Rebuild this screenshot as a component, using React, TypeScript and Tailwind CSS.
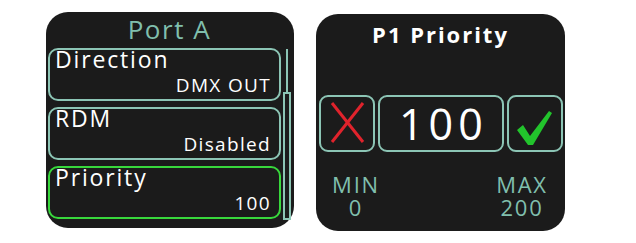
export default function App() {
  const items = [
    { name: "Direction", value: "DMX OUT", active: false },
    { name: "RDM", value: "Disabled", active: false },
    { name: "Priority", value: "100", active: true },
  ];
  return (
    <div className="w-[636px] h-[243px] bg-white flex items-start pl-[46px] pt-[12px] gap-[22px] font-['Open_Sans',sans-serif]">
      {/* Left panel */}
      <div className="w-[248px] h-[216px] rounded-[22px] bg-[#1b1b1b] flex flex-col pl-[2px] pr-[3px]">
        <div className="h-[36px] pt-[4px] text-center text-[26px] leading-none text-[#80bfad] tracking-[0.06em]">
          Port A
        </div>
        <div className="flex">
          <div className="w-[233px] flex flex-col gap-[6px]">
            {items.map((it) => (
              <div
                key={it.name}
                className={
                  it.active
                    ? "h-[53px] rounded-[10px] border-2 border-[#38d83c] flex flex-col justify-between pl-[5px] pr-[8px] pb-[4px]"
                    : "h-[53px] rounded-[10px] border-2 border-[#8cc5b5] flex flex-col justify-between pl-[5px] pr-[8px] pb-[4px]"
                }
              >
                <div className="text-[23px] leading-[18px] text-white tracking-[0.08em]">{it.name}</div>
                <div className="text-[19px] leading-[19px] text-white text-right tracking-[0.07em]">{it.value}</div>
              </div>
            ))}
          </div>
          <div className="ml-[2px] mt-[1px] h-[171px] w-[8px] flex flex-col items-center">
            <div className="w-[2px] h-[43px] bg-[#8cc5b5]" />
            <div className="w-[8px] flex-1 border-2 border-[#8cc5b5]" />
          </div>
        </div>
      </div>

      {/* Right panel */}
      <div className="mt-[2px] w-[249px] h-[217px] rounded-[22px] bg-[#1b1b1b] flex flex-col">
        <div className="pt-[9px] text-center text-[22px] leading-none font-bold text-white tracking-[0.09em]">
          P1 Priority
        </div>
        <div className="mt-[50px] h-[57px] flex gap-[3px] pl-[3px]">
          <div className="w-[56px] h-[57px] rounded-[9px] border-2 border-[#8cc5b5]">
            <svg width="52" height="53" viewBox="0 0 52 53">
              <line x1="11" y1="6" x2="42" y2="45" stroke="#e0232c" strokeWidth="3" />
              <line x1="42" y1="6" x2="11" y2="45" stroke="#e0232c" strokeWidth="3" />
            </svg>
          </div>
          <div className="w-[126px] h-[57px] rounded-[9px] border-2 border-[#8cc5b5] flex items-center justify-center">
            <span className="text-[43px] leading-none text-white tracking-[0.12em] pl-[5px]">100</span>
          </div>
          <div className="w-[56px] h-[57px] rounded-[9px] border-2 border-[#8cc5b5]">
            <svg width="52" height="53" viewBox="0 0 52 53">
              <polygon points="8,33 14,28 21,39 40,14 43,16 24,48 19,48" fill="#22c42c" />
            </svg>
          </div>
        </div>
        <div className="mt-[21px] flex justify-between pr-[3px] text-[22px] text-[#80bfad] tracking-[0.08em]">
          <div className="w-[80px] text-center flex flex-col">
            <span className="leading-[23px]">MIN</span>
            <span className="leading-[23px]">0</span>
          </div>
          <div className="w-[80px] text-center flex flex-col">
            <span className="leading-[23px]">MAX</span>
            <span className="leading-[23px]">200</span>
          </div>
        </div>
      </div>
    </div>
  );
}
